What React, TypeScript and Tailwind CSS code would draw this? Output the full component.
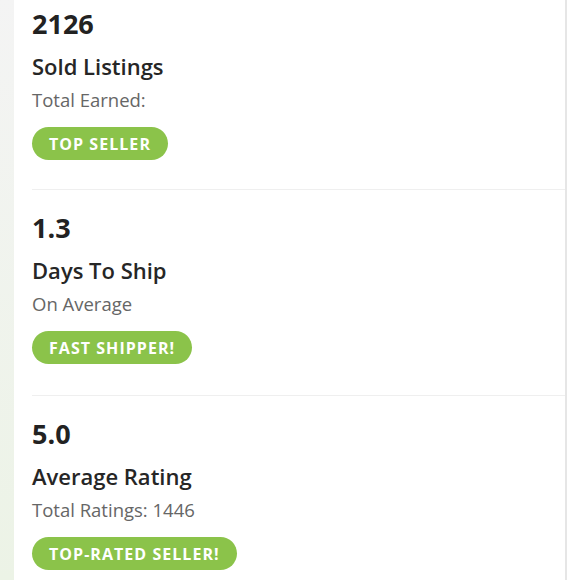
import React from 'react';

interface Stat {
  value: string;
  title: string;
  subtitle: string;
  badge: string;
}

const stats: Stat[] = [
  { value: '2126', title: 'Sold Listings', subtitle: 'Total Earned:', badge: 'Top Seller' },
  { value: '1.3', title: 'Days To Ship', subtitle: 'On Average', badge: 'Fast Shipper!' },
  { value: '5.0', title: 'Average Rating', subtitle: 'Total Ratings: 1446', badge: 'Top-Rated Seller!' },
];

export default function App() {
  return (
    <div className="flex h-[580px] w-[580px] overflow-hidden bg-white" style={{ fontFamily: '"Open Sans", Lato, sans-serif' }}>
      <div className="w-[14px] shrink-0 bg-gradient-to-b from-[#f4f4f4] to-[#ecf3e6]" />
      <div className="w-[553px] shrink-0 border-r-2 border-[#e6e6e6] pl-[18px]">
        {stats.map((s, i) => (
          <div key={s.value} className={i > 0 ? 'h-[206px] border-t border-[#efefef] pt-[20px]' : 'h-[189px] pt-[6px]'}>
            <div className="text-[27px] font-bold leading-[36px] text-[#222]">{s.value}</div>
            <div className="mt-[11px] text-[22px] font-semibold leading-[26px] text-[#262626]">{s.title}</div>
            <div className="mt-[9px] text-[18.5px] leading-[24px] text-[#666]">{s.subtitle}</div>
            <div className="mt-[15px] inline-flex h-[33px] items-center rounded-full bg-[#8bc34a] px-[17px] text-[16px] font-bold uppercase tracking-[0.065em] text-white">
              {s.badge}
            </div>
          </div>
        ))}
      </div>
    </div>
  );
}
